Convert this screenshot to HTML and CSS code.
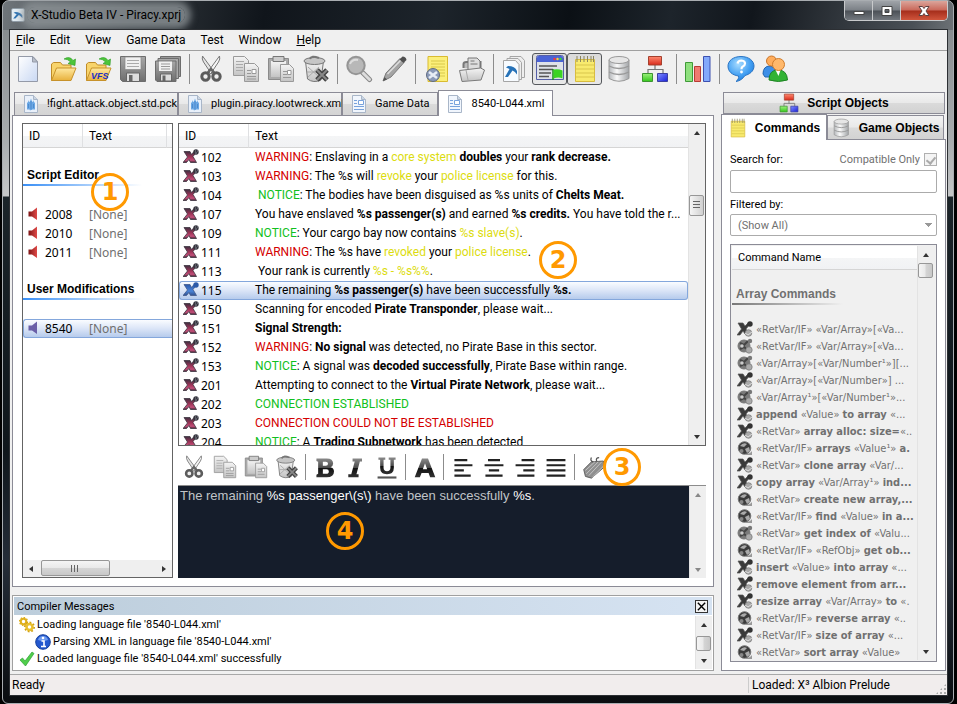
FILE: index.html
```html
<!DOCTYPE html>
<html lang="en">
<head>
<meta charset="utf-8">
<title>X-Studio Beta IV - Piracy.xprj</title>
<link rel="stylesheet" href="styles.css">
</head>
<body>
<svg class="sprite" aria-hidden="true">
  <defs>
    <linearGradient id="g-paper" x1="0" y1="0" x2="1" y2="1"><stop offset="0" stop-color="#fff"/><stop offset="1" stop-color="#c9d8f3"/></linearGradient>
    <linearGradient id="g-gray" x1="0" y1="0" x2="0" y2="1"><stop offset="0" stop-color="#f4f4f4"/><stop offset="1" stop-color="#c4c4c4"/></linearGradient>
    <linearGradient id="g-dark" x1="0" y1="0" x2="0" y2="1"><stop offset="0" stop-color="#a8a8a8"/><stop offset="1" stop-color="#6e6e6e"/></linearGradient>
    <linearGradient id="g-fold" x1="0" y1="0" x2="0" y2="1"><stop offset="0" stop-color="#ffe9a0"/><stop offset="1" stop-color="#e8b13c"/></linearGradient>
    <linearGradient id="g-ink" x1="0" y1="0" x2="0" y2="1"><stop offset="0" stop-color="#8a8a8a"/><stop offset=".5" stop-color="#4a4a4a"/><stop offset=".52" stop-color="#111"/><stop offset="1" stop-color="#333"/></linearGradient>
    <linearGradient id="g-red" x1="0" y1="0" x2="0" y2="1"><stop offset="0" stop-color="#ff8a70"/><stop offset="1" stop-color="#d92b1c"/></linearGradient>
    <linearGradient id="g-green" x1="0" y1="0" x2="0" y2="1"><stop offset="0" stop-color="#9bf07c"/><stop offset="1" stop-color="#35c71c"/></linearGradient>
    <linearGradient id="g-blue" x1="0" y1="0" x2="1" y2="1"><stop offset="0" stop-color="#7f8dff"/><stop offset="1" stop-color="#1a20d8"/></linearGradient>
    <linearGradient id="g-cyl" x1="0" y1="0" x2="1" y2="0"><stop offset="0" stop-color="#b5b8bb"/><stop offset=".4" stop-color="#fafafa"/><stop offset="1" stop-color="#a2a5a8"/></linearGradient>
    <radialGradient id="g-help" cx=".4" cy=".3" r=".8"><stop offset="0" stop-color="#a8dcff"/><stop offset=".6" stop-color="#3f9df2"/><stop offset="1" stop-color="#1a6fd0"/></radialGradient>
    <linearGradient id="g-xrow" x1="0" y1="0" x2="0" y2="1"><stop offset="0" stop-color="#3c3040"/><stop offset=".5" stop-color="#a03458"/><stop offset=".8" stop-color="#c2507a"/><stop offset="1" stop-color="#3a2230"/></linearGradient>
    <linearGradient id="g-xsel" x1="0" y1="0" x2="0" y2="1"><stop offset="0" stop-color="#2c58a8"/><stop offset=".6" stop-color="#4a84d8"/><stop offset="1" stop-color="#33508c"/></linearGradient>
    <linearGradient id="g-spk" x1="0" y1="0" x2="1" y2="0"><stop offset="0" stop-color="#7e1414"/><stop offset="1" stop-color="#e04a48"/></linearGradient>
  </defs>
  <symbol id="i-new" viewBox="0 0 28 28"><path d="M4.500 1.500h14.500l4.500 5v20h-19z" fill="url(#g-paper)" stroke="#949aa8"/><path d="M18.500 1.500v5.500h5z" fill="#b9bfca" stroke="#949aa8"/></symbol>
  <symbol id="i-open" viewBox="0 0 28 28"><path d="M2.500 25.500V9l2-1.500h7l2 2.500h8.500v4" fill="#f8d46c" stroke="#c08c28"/><path d="M2.500 25.500l5-12.500h19.500l-5 12.500z" fill="url(#g-fold)" stroke="#c7922a"/><path d="M15 4q6-3.500 9 1.500l2.500-1.500-.5 6.500-7-2 2.500-1.500Q19 4 15 4z" fill="#4cc63a" stroke="#2c9a25" stroke-width=".6"/></symbol>
  <symbol id="i-vfs" viewBox="0 0 28 28"><use href="#i-open"/><text x="7" y="24" font-family="Liberation Sans" font-size="9" font-style="italic" font-weight="bold" fill="#2030c8">VFS</text></symbol>
  <symbol id="i-save" viewBox="0 0 28 28"><path d="M1.500 1.500h25v25H3.500l-2-2z" fill="url(#g-dark)" stroke="#6d6d6d"/><path d="M6 2h16v12.500H6z" fill="#f0f0f0" stroke="#888" stroke-width=".7"/><path d="M8 5.500h12M8 8.500h12M8 11.500h12" stroke="#aaa"/><path d="M7.500 18h13v8.500h-13z" fill="#ddd" stroke="#666"/><path d="M10 20h3.500v6.500H10z" fill="#666"/></symbol>
  <symbol id="i-saveall" viewBox="0 0 28 28"><path d="M6.500 1.500h20v20h-20z" fill="#999" stroke="#6d6d6d"/><path d="M4 3.500h20.500v20H4z" fill="#aaa" stroke="#6d6d6d"/><path d="M1.500 6h20.500v20.500h-19l-1.500-1.500z" fill="url(#g-dark)" stroke="#6d6d6d"/><path d="M5 6.500h13v9.500H5z" fill="#f0f0f0"/><path d="M7 9h9M7 11.500h9M7 14h9" stroke="#999"/><path d="M6.500 19h11v7h-11z" fill="#ddd" stroke="#666"/><path d="M8.500 20.500h3v5.500h-3z" fill="#666"/></symbol>
  <symbol id="i-cut" viewBox="0 0 28 28"><path d="M5.500 1q-1 3 1 6l8 12 2-3z" fill="#e4e4e4" stroke="#777"/><path d="M22.500 1q1 3-1 6l-8 12-2-3z" fill="#f5f5f5" stroke="#777"/><path d="M10.500 18l3.500-4 3.500 4" fill="none" stroke="#666" stroke-width="2.500"/><circle cx="8.500" cy="21.500" r="3.700" fill="#f0f0f0" stroke="#5c5c5c" stroke-width="3"/><circle cx="19.500" cy="21.500" r="3.700" fill="#f0f0f0" stroke="#5c5c5c" stroke-width="3"/></symbol>
  <symbol id="i-copy" viewBox="0 0 28 28"><g fill="url(#g-gray)" stroke="#9a9a9a"><path d="M1.500 1.500h11l4 4v15h-15z"/><path d="M12.500 8.500h10l4 4v14h-14z"/></g><path d="M4 6.500h8M4 9.500h7M4 12.500h7M4 15.500h7" stroke="#aaa"/><path d="M15 15.500h4M15 18.500h4M15 21.500h9M15 24h9" stroke="#999"/><path d="M20 14.500h4v4h-4z" fill="#fff" stroke="#999"/></symbol>
  <symbol id="i-paste" viewBox="0 0 28 28"><path d="M1.500 3.500h20v21h-20z" fill="#aaa" stroke="#8b8b8b"/><path d="M4 6h15v16H4z" fill="url(#g-gray)"/><path d="M6 1.500h11v5H6z" fill="#ccc" stroke="#777"/><path d="M13.500 9.500h9l4 4v13h-13z" fill="url(#g-gray)" stroke="#999"/><path d="M16 16.500h4M16 19.500h4M16 22.500h8" stroke="#999"/><path d="M20.500 15.500h3.500v4h-3.500z" fill="#fff" stroke="#999"/></symbol>
  <symbol id="i-del" viewBox="0 0 28 28"><path d="M3.500 6l2 18q6 4.500 13.500 1l2.500-19z" fill="url(#g-gray)" stroke="#777"/><path d="M6 12l11 10M17 12L6 22M5 17h14" stroke="#aaa"/><ellipse cx="12.500" cy="6" rx="10.500" ry="3.500" fill="#c6c6c6" stroke="#777"/><path d="M8 4q1-4 9-1" fill="none" stroke="#777" stroke-width="2"/><path d="M15 15l10 10M25 15L15 25" stroke="#444" stroke-width="5"/><path d="M15 15l10 10M25 15L15 25" stroke="#888" stroke-width="2"/></symbol>
  <symbol id="i-find" viewBox="0 0 28 28"><path d="M17.500 17.500l7 7" stroke="#888" stroke-width="5" stroke-linecap="round"/><path d="M18 18l6.500 6.500" stroke="#ddd" stroke-width="3" stroke-linecap="round"/><circle cx="11" cy="10.500" r="8.700" fill="#b8b8b8" stroke="#959595" stroke-width="2"/><path d="M5 9q2-5 8-4" stroke="#ddd" stroke-width="2" fill="none"/></symbol>
  <symbol id="i-edit" viewBox="0 0 28 28"><path d="M3 26l3-8L20 3.500l4 4L11 22z" fill="#a4a4a4" stroke="#7c7c7c"/><path d="M7.500 19L21 5" stroke="#ddd" stroke-width="1.500"/><path d="M19.500 4.500l3-3q3.500 0 4 3.500l-3 3z" fill="#505050"/><path d="M3 26l1.500-4 2.500 2.500z" fill="#555"/></symbol>
  <symbol id="i-script" viewBox="0 0 28 28"><path d="M5 1.500h19.500v25H5z" fill="#fbef7a" stroke="#d9bb30"/><path d="M8 6h14M8 9h14M8 12h14M8 15h14M8 18h14M8 21h14" stroke="#d9c94a"/><circle cx="10" cy="20" r="6.500" fill="#8b9ab8" stroke="#5f6b84"/><path d="M6 17l8 6M14 17l-8 6" stroke="#e7edf5" stroke-width="2.500"/></symbol>
  <symbol id="i-box" viewBox="0 0 28 28"><path d="M5.500 13V9q0-2 3-2h14v8" fill="#bbb" stroke="#777" stroke-width="2"/><path d="M10 12V3h9l3 3v10H10z" fill="#ddd" stroke="#777"/><path d="M12.500 9h7M12.500 6h4" stroke="#777"/><path d="M1.500 15.500l21-2.500 4 2-3.500 10-19 1.500z" fill="url(#g-gray)" stroke="#7b7b7b"/><path d="M8 15l2 10" stroke="#aaa"/></symbol>
  <symbol id="i-pages" viewBox="0 0 28 28"><g fill="#eee" stroke="#a5a5a5"><path d="M9 1.500h11l3.500 4v17H9z"/><path d="M6 3.500h11l3.500 4v17H6z"/><path d="M2.500 5.500h12l3.500 4v17H2.500z" fill="#f7fbff"/></g><path d="M5 12.500l2-1.500q7 0 9 5v3.500q-2-3-4.500-4L7 22H4l4.500-8z" fill="#2672b8"/></symbol>
  <symbol id="i-window" viewBox="0 0 28 28"><path d="M.5 2.500q0-2 2-2h23q2 0 2 2v22h-27z" fill="#dfe2e8" stroke="#555fa8"/><path d="M1 7V2.500q0-1.500 1.500-1.500h23q1.500 0 1.500 1.500V7z" fill="#4a63d6"/><circle cx="18.500" cy="4" r="1.200" fill="#f33"/><circle cx="21.500" cy="4" r="1.200" fill="#fc3"/><circle cx="24.500" cy="4" r="1.200" fill="#3d3"/><path d="M3 11h18M3 14.500h14M3 18h12M3 21.500h10" stroke="#555" stroke-width="1.300"/><path d="M17 25V14" stroke="#1a8a1a" stroke-width="1.500"/><path d="M17.500 14.500q5-1 9 1v8q-4-2-9 0z" fill="#3bd324"/></symbol>
  <symbol id="i-note" viewBox="0 0 28 28"><path d="M4.500 4.500h19v22h-19z" fill="#f8ea6e" stroke="#d8bc3e"/><path d="M5 10h18M5 14h18M5 18h18M5 22h18" stroke="#d9c64c"/><path d="M6 1v6M9.500 1v6M13 1v6M16.500 1v6M20 1v6M22.500 1v6" stroke="#8b8660"/></symbol>
  <symbol id="i-db" viewBox="0 0 28 28"><path d="M3 5v18.500q10 5.500 20 0V5z" fill="url(#g-cyl)" stroke="#999"/><path d="M3 11q10 5 20 0M3 17q10 5 20 0" fill="none" stroke="#999" stroke-width="1.300"/><ellipse cx="13" cy="5" rx="10" ry="3.500" fill="#e6e6e6" stroke="#999"/></symbol>
  <symbol id="i-org" viewBox="0 0 28 28"><path d="M14 9v6M7 19v-4.500h15V19" fill="none" stroke="#777" stroke-width="1.200"/><path d="M7.500 1.500h13v8.500h-13z" fill="url(#g-red)" stroke="#a4402e"/><path d="M1.500 18.500h10v8h-10z" fill="url(#g-green)" stroke="#3d9430"/><path d="M16.500 18.500h10v8h-10z" fill="url(#g-blue)" stroke="#3b3fa0"/></symbol>
  <symbol id="i-chart" viewBox="0 0 28 28"><path d="M1.500 7.500h7v19h-7z" fill="#8fe07e" stroke="#3f9a38"/><path d="M10.500 11.500h6v15h-6z" fill="#f07a70" stroke="#b83a34"/><path d="M19.500 1.500h6.500v25h-6.500z" fill="#83a9fb" stroke="#3c50b0"/></symbol>
  <symbol id="i-help" viewBox="0 0 28 28"><path d="M14 1.500c8 0 13 4.500 13 9.500 0 5.500-5 8.500-9 9.500-2 3-5 5.500-9 6 2-1.500 3-3.500 2.500-5.500C5 20 1 16.500 1 11c0-5 5-9.500 13-9.500z" fill="url(#g-help)" stroke="#2b75c4"/><path d="M10.500 8.500q.5-3 4-3 3.500.3 3.500 3 0 2-2.500 3.200-1 .6-1 2.600" fill="none" stroke="#fff" stroke-width="2.200"/><circle cx="14.500" cy="17" r="1.400" fill="#fff"/></symbol>
  <symbol id="i-users" viewBox="0 0 28 28"><path d="M1 19q0-8 7-8l5 2v9H3z" fill="#3c8fe8" stroke="#2266b0"/><circle cx="9.500" cy="6" r="5" fill="#ffad5c" stroke="#c9752a"/><path d="M7 25q0-10 9-10 9 0 9.500 10-9 3-18.500 0z" fill="#32b335" stroke="#1f8425"/><path d="M13.500 15h5l-2 6z" fill="#fff"/><circle cx="16.500" cy="9.500" r="6" fill="#ffb86b" stroke="#d07c2c"/></symbol>
  <symbol id="i-bold" viewBox="0 0 28 28"><path d="M4 4h12q7.500 0 7.500 6 0 3-3 4.300 4 1 4 5Q24.500 26 16 26H4v-3l2-1V8L4 7zM11.500 8v4.500h3.500q2.500 0 2.500-2.200T15 8zM11.500 16.500V22h4q3 0 3-2.800t-3-2.700z" fill="url(#g-ink)" fill-rule="evenodd"/></symbol>
  <symbol id="i-italic" viewBox="0 0 28 28"><path d="M10 4h11v3.500h-2.500L14.500 22.500H17V26H5v-3.500h3.500l4-15H10z" fill="url(#g-ink)"/></symbol>
  <symbol id="i-under" viewBox="0 0 28 28"><path d="M4 3h8v2.500h-2V15q0 4 4 4t4-4V5.500h-2V3h8v2.500h-2V15q0 7.500-8 7.500T6 15V5.500H4z" fill="url(#g-ink)"/><path d="M3 25h22v2.500H3z" fill="#555"/></symbol>
  <symbol id="i-font" viewBox="0 0 28 28"><path d="M10.500 4h7L26 26h-6l-1.800-5H10l-2 5H2zM11.500 16.500h5L14 9.500z" fill="url(#g-ink)" fill-rule="evenodd"/></symbol>
  <symbol id="i-al" viewBox="0 0 28 28"><path d="M4 6h15M4 12h21M4 18h11M4 24h19" stroke="#222" stroke-width="2.500"/></symbol>
  <symbol id="i-ac" viewBox="0 0 28 28"><path d="M7 6h14M3 12h22M8 18h12M4 24h20" stroke="#222" stroke-width="2.500"/></symbol>
  <symbol id="i-ar" viewBox="0 0 28 28"><path d="M10 6h15M3 12h22M12 18h13M5 24h20" stroke="#222" stroke-width="2.500"/></symbol>
  <symbol id="i-aj" viewBox="0 0 28 28"><path d="M3 6h22M3 12h22M3 18h22M3 24h22" stroke="#222" stroke-width="2.500"/></symbol>
  <symbol id="i-tag" viewBox="0 0 28 28"><path d="M2 17l9-9 14-1 1 7-15 13-7-2z" fill="#8f8f8f" stroke="#555"/><path d="M4 18L15 8M5 22L19 8M8 24L23 8M12 26l14-14" stroke="#ccc"/><path d="M13 8q-4-1-2-5M17 7q-1-4 3-4" stroke="#555" fill="none" stroke-width="1.500"/></symbol>
  <symbol id="i-ship" viewBox="0 0 16 18"><path d="M1.500.5h9l4 4v13h-13z" fill="#e9f0fa" stroke="#a9b6c8"/><path d="M10.500.5v4h4" fill="#cbd6e4" stroke="#a9b6c8"/><path d="M8 3.500l1 3 1 .5.500-2 .5 2 1 1v6l-1 1-1-1-1 1H8l-1 .5-1-1.500-1 1-1-1V8l1-1 .5-2L6 7l1-.5z" fill="#6aa7e4"/><path d="M8 6v8M5.500 9v4M10.500 9v4" stroke="#3f7fc4" stroke-width=".7"/></symbol>
  <symbol id="i-doc" viewBox="0 0 16 18"><path d="M1.500.5h9l4 4v13h-13z" fill="#f1f6fd" stroke="#a9b6c8"/><path d="M10.500.5v4h4" fill="#cbd6e4" stroke="#a9b6c8"/><path d="M3 5.500h3M3 8.500h3M3 11.500h10M3 14.500h10" stroke="#79a3dc"/><path d="M7.500 5.500h5v4h-5z" fill="#fff" stroke="#79a3dc"/></symbol>
  <symbol id="i-x" viewBox="0 0 16 16"><path d="M1 2.500h6l1.500 3 2.500-3h3L10 7.500l3.500 6H7.500L6 10.500l-2.500 3H0l4.500-5.500z" fill="url(#g-xrow)" stroke="#3d3340" stroke-width=".8"/><circle cx="13" cy="3" r="2.700" fill="#35353d"/><path d="M12 2h1M14 2h1M12 4h2" stroke="#aab" stroke-width=".7"/></symbol>
  <symbol id="i-xs" viewBox="0 0 16 16"><path d="M1 2.500h6l1.500 3 2.500-3h3L10 7.500l3.500 6H7.500L6 10.500l-2.500 3H0l4.500-5.500z" fill="url(#g-xsel)" stroke="#42598a" stroke-width=".8"/><circle cx="13" cy="3" r="2.700" fill="#2c5aa8"/></symbol>
  <symbol id="i-cx" viewBox="0 0 16 16"><path d="M1 2h5l2 3 3-3h3L9 8l3 5H8L6 10l-3 4H0l4.500-6z" fill="#3a3a3a" stroke="#555" stroke-width=".7"/><circle cx="13" cy="3" r="2.700" fill="#333"/><circle cx="11.500" cy="12" r="3.300" fill="#aaa" stroke="#777" stroke-width=".7"/><path d="M8 12l3 2 4-3" stroke="#ddd" fill="none"/></symbol>
  <symbol id="i-cg" viewBox="0 0 16 16"><circle cx="7" cy="8" r="6" fill="#7a7a7a" stroke="#777"/><path d="M3 5l4 2 4-4M3 11l4-2 5 4" stroke="#444" stroke-width="2" fill="none"/><circle cx="5" cy="8" r="1.700" fill="#ccc"/><circle cx="13" cy="3" r="2.200" fill="#777"/><circle cx="12" cy="12" r="3.200" fill="#aaa" stroke="#777" stroke-width=".7"/></symbol>
  <symbol id="i-cb" viewBox="0 0 16 16"><circle cx="7.500" cy="8" r="6.300" fill="#3c3c3c" stroke="#777"/><path d="M3 6q3-4 7-2l-3 3zM8 9l4-2 1 4-3 2z" fill="#aaa"/><circle cx="4.500" cy="11" r="2" fill="#888"/><path d="M9 14q4 0 6-3v4H9z" fill="#999"/></symbol>
  <symbol id="i-spk" viewBox="0 0 16 16"><path d="M1.500 5.500H5L10 1.500v12.500L5 10.500H1.500z" fill="url(#g-spk)"/></symbol>
  <symbol id="i-spks" viewBox="0 0 16 16"><path d="M1.500 5.500H5L10 1.500v12.500L5 10.500H1.500z" fill="#6a5fa8"/></symbol>
  <symbol id="i-gears" viewBox="0 0 16 16"><circle cx="4.500" cy="4.500" r="2.700" fill="none" stroke="#dfb01e" stroke-width="2"/><circle cx="4.500" cy="4.500" r="3.900" fill="none" stroke="#dfb01e" stroke-width="1.500" stroke-dasharray="1.500 1.500"/><circle cx="10.500" cy="10" r="3" fill="none" stroke="#eac02c" stroke-width="2.500"/><circle cx="10.500" cy="10" r="4.700" fill="none" stroke="#d3a213" stroke-width="1.600" stroke-dasharray="1.800 1.800"/></symbol>
  <symbol id="i-info" viewBox="0 0 16 16"><circle cx="8" cy="8" r="7.300" fill="#2358cf" stroke="#16409c"/><path d="M3 6q1-4 5-4t5 4q-5 2-10 0z" fill="#6e9bf0"/><path d="M6.500 7h2.500v5M6 12.500h5" stroke="#fff" stroke-width="1.600" fill="none"/><circle cx="8" cy="4" r="1.300" fill="#fff"/></symbol>
  <symbol id="i-ok" viewBox="0 0 16 16"><path d="M1 9l2.500-2L6 10 13 1l2 1.500L6.500 15z" fill="#4fce4a" stroke="#2f9f36" stroke-width=".7"/></symbol>
  <symbol id="i-app" viewBox="0 0 16 16"><rect x=".5" y=".5" width="15" height="15" rx="2" fill="#e3edf4" stroke="#8a98a4"/><path d="M3 5.500l2-1q6 0 8 4v3q-2-2.500-4-3.500L5 12H2.500L6.500 7z" fill="#2d73b4"/></symbol>
</svg>

<div class="window">
  <header class="titlebar">
    <svg class="app-icon"><use href="#i-app"/></svg>
    <h1 class="title">X-Studio Beta IV - Piracy.xprj</h1>
    <div class="window-buttons">
      <button class="wb wb-min" aria-label="Minimize"><svg viewBox="0 0 14 12"><path d="M2 6.500h10v3H2z" fill="#fff" stroke="#444"/></svg></button>
      <button class="wb wb-max" aria-label="Maximize"><svg viewBox="0 0 14 12"><path d="M2 1.500h10v9H2zM5 4.500v3h4v-3z" fill="#fff" stroke="#444" fill-rule="evenodd"/></svg></button>
      <button class="wb wb-close" aria-label="Close"><svg viewBox="0 0 14 12"><path d="M2 1.500h3.500L7 3.500l1.500-2H12L9 6l3 4.500H8.500L7 8.500l-1.500 2H2L5 6z" fill="#fff" stroke="#5c4040"/></svg></button>
    </div>
  </header>

  <div class="client">
    <nav class="menubar">
      <button><u>F</u>ile</button><button>Edit</button><button>View</button><button>Game Data</button><button>Test</button><button>Window</button><button><u>H</u>elp</button>
    </nav>
    <div class="toolbar">
      <button aria-label="New"><svg><use href="#i-new"/></svg></button>
      <button aria-label="Open"><svg><use href="#i-open"/></svg></button>
      <button aria-label="Open from VFS"><svg><use href="#i-vfs"/></svg></button>
      <button aria-label="Save"><svg><use href="#i-save"/></svg></button>
      <button aria-label="Save all"><svg><use href="#i-saveall"/></svg></button>
      <span class="sep"></span>
      <button aria-label="Cut"><svg><use href="#i-cut"/></svg></button>
      <button aria-label="Copy"><svg><use href="#i-copy"/></svg></button>
      <button aria-label="Paste"><svg><use href="#i-paste"/></svg></button>
      <button aria-label="Delete"><svg><use href="#i-del"/></svg></button>
      <span class="sep"></span>
      <button aria-label="Find"><svg><use href="#i-find"/></svg></button>
      <button aria-label="Edit"><svg><use href="#i-edit"/></svg></button>
      <span class="sep"></span>
      <button aria-label="Compile script"><svg><use href="#i-script"/></svg></button>
      <button aria-label="Project"><svg><use href="#i-box"/></svg></button>
      <span class="sep"></span>
      <button aria-label="Documents"><svg><use href="#i-pages"/></svg></button>
      <button class="pressed" aria-label="Output window" aria-pressed="true"><svg><use href="#i-window"/></svg></button>
      <button class="pressed" aria-label="Commands window" aria-pressed="true"><svg><use href="#i-note"/></svg></button>
      <button aria-label="Game objects"><svg><use href="#i-db"/></svg></button>
      <button aria-label="Script objects"><svg><use href="#i-org"/></svg></button>
      <span class="sep"></span>
      <button aria-label="Statistics"><svg><use href="#i-chart"/></svg></button>
      <span class="sep"></span>
      <button aria-label="Help"><svg><use href="#i-help"/></svg></button>
      <button aria-label="Community"><svg><use href="#i-users"/></svg></button>
    </div>

    <div class="workspace">
      <main class="documents">
        <div class="doc-tabs">
          <button class="doc-tab wide"><svg><use href="#i-ship"/></svg>!fight.attack.object.std.pck</button>
          <button class="doc-tab wide"><svg><use href="#i-ship"/></svg>plugin.piracy.lootwreck.xml</button>
          <button class="doc-tab"><svg><use href="#i-doc"/></svg>Game Data</button>
          <button class="doc-tab active"><svg><use href="#i-doc"/></svg>8540-L044.xml</button>
        </div>
        <div class="doc-page">
          <section class="box pages">
            <div class="clip">
              <table class="list">
                <colgroup><col class="c-id"><col class="c-text"><col></colgroup>
                <thead><tr><th>ID</th><th>Text</th><th></th></tr></thead>
                <tbody>
                  <tr class="group"><th colspan="3"><span>Script Editor</span></th></tr>
                  <tr><td><svg><use href="#i-spk"/></svg>2008</td><td class="dim">[None]</td><td></td></tr>
                  <tr><td><svg><use href="#i-spk"/></svg>2010</td><td class="dim">[None]</td><td></td></tr>
                  <tr><td><svg><use href="#i-spk"/></svg>2011</td><td class="dim">[None]</td><td></td></tr>
                  <tr class="group"><th colspan="3"><span>User Modifications</span></th></tr>
                  <tr class="selected"><td><svg><use href="#i-spks"/></svg>8540</td><td class="dim">[None]</td><td></td></tr>
                </tbody>
              </table>
            </div>
            <div class="hscroll"><button class="arrow left" aria-label="Scroll left"></button><span class="thumb"></span><button class="arrow right" aria-label="Scroll right"></button></div>
            <span class="callout callout-1">1</span>
          </section>

          <div class="strings">
            <section class="box string-list">
              <div class="clip">
                <table class="list">
                  <colgroup><col class="c-sid"><col></colgroup>
                  <thead><tr><th>ID</th><th>Text</th></tr></thead>
                  <tbody>
                    <tr><td><svg><use href="#i-x"/></svg>102</td><td><i class="r">WARNING</i>: Enslaving in a <i class="y">core system</i> <b>doubles</b> your <b>rank decrease.</b></td></tr>
                    <tr><td><svg><use href="#i-x"/></svg>103</td><td><i class="r">WARNING</i>: The %s will <i class="y">revoke</i> your <i class="y">police license</i> for this.</td></tr>
                    <tr><td><svg><use href="#i-x"/></svg>104</td><td>&nbsp;<i class="g">NOTICE</i>: The bodies have been disguised as %s units of <b>Chelts Meat.</b></td></tr>
                    <tr><td><svg><use href="#i-x"/></svg>107</td><td>You have enslaved <b>%s passenger(s)</b> and earned <b>%s credits.</b> You have told the r...</td></tr>
                    <tr><td><svg><use href="#i-x"/></svg>109</td><td><i class="g">NOTICE</i>: Your cargo bay now contains <i class="y">%s slave(s)</i>.</td></tr>
                    <tr><td><svg><use href="#i-x"/></svg>111</td><td><i class="r">WARNING</i>: The %s have <i class="y">revoked</i> your <i class="y">police license</i>.</td></tr>
                    <tr><td><svg><use href="#i-x"/></svg>113</td><td>&nbsp;Your rank is currently <i class="y">%s - %s%%</i>.</td></tr>
                    <tr class="selected"><td><svg><use href="#i-xs"/></svg>115</td><td>The remaining <b>%s passenger(s)</b> have been successfully <b>%s.</b></td></tr>
                    <tr><td><svg><use href="#i-x"/></svg>150</td><td>Scanning for encoded <b>Pirate Transponder</b>, please wait...</td></tr>
                    <tr><td><svg><use href="#i-x"/></svg>151</td><td><b>Signal Strength:</b></td></tr>
                    <tr><td><svg><use href="#i-x"/></svg>152</td><td><i class="r">WARNING</i>: <b>No signal</b> was detected, no Pirate Base in this sector.</td></tr>
                    <tr><td><svg><use href="#i-x"/></svg>153</td><td><i class="g">NOTICE</i>: A signal was <b>decoded successfully</b>, Pirate Base within range.</td></tr>
                    <tr><td><svg><use href="#i-x"/></svg>201</td><td>Attempting to connect to the <b>Virtual Pirate Network</b>, please wait...</td></tr>
                    <tr><td><svg><use href="#i-x"/></svg>202</td><td><i class="g">CONNECTION ESTABLISHED</i></td></tr>
                    <tr><td><svg><use href="#i-x"/></svg>203</td><td><i class="r">CONNECTION COULD NOT BE ESTABLISHED</i></td></tr>
                    <tr><td><svg><use href="#i-x"/></svg>204</td><td><i class="g">NOTICE</i>: A <b>Trading Subnetwork</b> has been detected</td></tr>
                  </tbody>
                </table>
              </div>
              <div class="vscroll"><button class="arrow up" aria-label="Scroll up"></button><span class="thumb strings-thumb"></span><button class="arrow down" aria-label="Scroll down"></button></div>
              <span class="callout callout-2">2</span>
            </section>

            <div class="format-bar">
              <button aria-label="Cut text"><svg><use href="#i-cut"/></svg></button>
              <button aria-label="Copy text"><svg><use href="#i-copy"/></svg></button>
              <button aria-label="Paste text"><svg><use href="#i-paste"/></svg></button>
              <button aria-label="Delete text"><svg><use href="#i-del"/></svg></button>
              <span class="sep"></span>
              <button aria-label="Bold"><svg><use href="#i-bold"/></svg></button>
              <button aria-label="Italic"><svg><use href="#i-italic"/></svg></button>
              <button aria-label="Underline"><svg><use href="#i-under"/></svg></button>
              <span class="sep"></span>
              <button aria-label="Colour"><svg><use href="#i-font"/></svg></button>
              <span class="sep"></span>
              <button aria-label="Align left"><svg><use href="#i-al"/></svg></button>
              <button aria-label="Centre"><svg><use href="#i-ac"/></svg></button>
              <button aria-label="Align right"><svg><use href="#i-ar"/></svg></button>
              <button aria-label="Justify"><svg><use href="#i-aj"/></svg></button>
              <span class="sep"></span>
              <button aria-label="Insert button"><svg><use href="#i-tag"/></svg></button>
              <span class="callout callout-3">3</span>
            </div>

            <div class="editor">
              <div class="editor-text" role="textbox" aria-label="String text" contenteditable="true">The remaining <em>%s passenger\(s\)</em> have been successfully <em>%s</em>.</div>
              <div class="vscroll idle"><button class="arrow up" aria-label="Scroll up"></button><button class="arrow down" aria-label="Scroll down"></button></div>
              <span class="callout callout-4">4</span>
            </div>
          </div>
        </div>

        <section class="output">
          <header><h2>Compiler Messages</h2><button aria-label="Close messages"><svg viewBox="0 0 12 12"><path d="M2 2l8 8M10 2l-8 8" stroke="#000" stroke-width="1.500"/></svg></button></header>
          <div class="output-body">
            <ul>
              <li><svg><use href="#i-gears"/></svg>Loading language file '8540-L044.xml'</li>
              <li class="nested"><svg><use href="#i-info"/></svg>Parsing XML in language file '8540-L044.xml'</li>
              <li><svg><use href="#i-ok"/></svg>Loaded language file '8540-L044.xml' successfully</li>
            </ul>
            <div class="vscroll"><button class="arrow up" aria-label="Scroll up"></button><span class="thumb output-thumb"></span><button class="arrow down" aria-label="Scroll down"></button></div>
          </div>
        </section>
      </main>

      <aside class="sidebar">
        <button class="side-tab top"><svg><use href="#i-org"/></svg>Script Objects</button>
        <div class="side-tabs">
          <button class="side-tab active"><svg><use href="#i-note"/></svg>Commands</button>
          <button class="side-tab"><svg><use href="#i-db"/></svg>Game Objects</button>
        </div>
        <div class="side-page">
          <div class="search-head"><label for="search">Search for:</label><label class="compat" for="compat">Compatible Only <input id="compat" type="checkbox" checked disabled></label></div>
          <input id="search" class="field" type="text">
          <label class="filter-label" for="filter">Filtered by:</label>
          <select id="filter" class="field" disabled><option>(Show All)</option></select>
          <div class="commands">
            <div class="clip">
              <table class="list">
                <thead><tr><th>Command Name</th></tr></thead>
                <tbody>
                  <tr class="group"><th><span>Array Commands</span></th></tr>
                  <tr><td><svg><use href="#i-cx"/></svg>«RetVar/IF» «Var/Array»[«Va...</td></tr>
                  <tr><td><svg><use href="#i-cg"/></svg>«RetVar/IF» «Var/Array»[«Va...</td></tr>
                  <tr><td><svg><use href="#i-cg"/></svg>«Var/Array»[«Var/Number¹»][...</td></tr>
                  <tr><td><svg><use href="#i-cx"/></svg>«Var/Array»[«Var/Number»] ...</td></tr>
                  <tr><td><svg><use href="#i-cg"/></svg>«Var/Array¹»[«Var/Number¹»...</td></tr>
                  <tr><td><svg><use href="#i-cx"/></svg><b>append</b> «Value» <b>to array</b> «...</td></tr>
                  <tr><td><svg><use href="#i-cx"/></svg>«RetVar» <b>array alloc: size=</b>«..</td></tr>
                  <tr><td><svg><use href="#i-cb"/></svg>«RetVar/IF» <b>arrays</b> «Value¹» <b>a.</b></td></tr>
                  <tr><td><svg><use href="#i-cx"/></svg>«RetVar» <b>clone array</b> «Var/...</td></tr>
                  <tr><td><svg><use href="#i-cx"/></svg><b>copy array</b> «Var/Array¹» <b>ind...</b></td></tr>
                  <tr><td><svg><use href="#i-cb"/></svg>«RetVar» <b>create new array,...</b></td></tr>
                  <tr><td><svg><use href="#i-cb"/></svg>«RetVar/IF» <b>find</b> «Value» <b>in a...</b></td></tr>
                  <tr><td><svg><use href="#i-cg"/></svg>«RetVar» <b>get index of</b> «Valu...</td></tr>
                  <tr><td><svg><use href="#i-cb"/></svg>«RetVar/IF» «RefObj» <b>get ob...</b></td></tr>
                  <tr><td><svg><use href="#i-cx"/></svg><b>insert</b> «Value» <b>into array</b> «...</td></tr>
                  <tr><td><svg><use href="#i-cx"/></svg><b>remove element from arr...</b></td></tr>
                  <tr><td><svg><use href="#i-cx"/></svg><b>resize array</b> «Var/Array» <b>to</b> «.</td></tr>
                  <tr><td><svg><use href="#i-cb"/></svg>«RetVar/IF» <b>reverse array</b> «..</td></tr>
                  <tr><td><svg><use href="#i-cx"/></svg>«RetVar/IF» <b>size of array</b> «...</td></tr>
                  <tr><td><svg><use href="#i-cb"/></svg>«RetVar» <b>sort array</b> «Value»</td></tr>
                </tbody>
              </table>
            </div>
            <div class="vscroll"><button class="arrow up" aria-label="Scroll up"></button><span class="thumb"></span><button class="arrow down" aria-label="Scroll down"></button></div>
          </div>
        </div>
      </aside>
    </div>

    <footer class="statusbar"><span class="status">Ready</span><span class="loaded">Loaded: X³ Albion Prelude</span><span class="grip"></span></footer>
  </div>
</div>
</body>
</html>
```
FILE: styles.css
```css
:root {
  --ui: Roboto, "Noto Sans", sans-serif;
  --wide: "Noto Sans", "Open Sans", sans-serif;
  --small: "DejaVu Sans Condensed", "DejaVu Sans", sans-serif;
  --heading: "Liberation Sans", Arial, sans-serif;
  --face: #f0f0f0;
  --line: #8b8b96;
}
* { box-sizing: border-box; }
body { margin: 0; background: #000; color: #000; font: 12px/16px var(--ui); }
button { margin: 0; padding: 0; border: 0; background: none; color: inherit; font: inherit; }
h1, h2, ul { margin: 0; padding: 0; font: inherit; list-style: none; }
i { font-style: normal; }
svg { display: block; flex: none; }
.sprite { position: absolute; width: 0; height: 0; }

.window {
  display: flex; flex-direction: column; height: 100vh;
  margin: 0 3px 0 2px; padding: 0 5px 7px 6px;
  border: 1px solid #a9adb1; border-radius: 7px 7px 6px 6px;
  background: linear-gradient(100deg, #70767b 0, #30363b 130px, #10151b 260px, #1d242b 430px, #0b1015 560px, #1d242b 660px, #11161c 740px, #4a5056 900px, #6d7276) top / 100% 29px no-repeat,
    linear-gradient(#7f8487, #a9adaf 140px, #c5c7c8 195px, #1b2429 196px, #0f161b 450px, #252d38 560px, #0a0d10);
}
.titlebar { display: flex; align-items: center; gap: 6px; height: 28px; padding-left: 2px; }
.app-icon { width: 14px; height: 14px; }
.title { padding: 0 4px; color: #000; background: rgba(140, 146, 150, .8); box-shadow: 0 0 7px 6px rgba(140, 146, 150, .8); border-radius: 8px; margin-left: -4px; }
.window-buttons { display: flex; align-self: flex-start; height: 20px; margin-left: auto; border: 1px solid #c8cacc; border-top: 0; border-radius: 0 0 5px 5px; overflow: hidden; }
.wb { display: grid; place-items: center; width: 28px; background: linear-gradient(#9fa3a8, #7b8086 48%, #4b5056 52%, #73787e); border-right: 1px solid #c8cacc; }
.wb svg { width: 14px; height: 12px; }
.wb-close { width: 46px; border-right: 0; background: linear-gradient(#dba59b, #c9685a 48%, #a52d1b 52%, #d0553c); }

.client { display: flex; flex-direction: column; flex: 1; min-height: 0; border: 1px solid #2c2f33; background: var(--face); }
.menubar { display: flex; gap: 15px; height: 21px; padding: 0 6px; border-bottom: 1px solid #a0a0a0; line-height: 19px; }
.toolbar { display: flex; align-items: center; height: 36px; }
.toolbar button { display: grid; place-items: center; width: 35px; height: 32px; }
.toolbar svg { width: 28px; height: 28px; }
.sep { width: 8px; height: 30px; background: linear-gradient(#8c8c8c, #8c8c8c) center / 1px 100% no-repeat; }
.toolbar .pressed { border: 1px solid #55585c; border-radius: 3px; background: linear-gradient(#dadada, #e8e8e8); }

.workspace { display: grid; grid-template-columns: minmax(0, 1fr) 225px; gap: 7px; flex: 1; min-height: 0; padding: 3px 1px 3px 2px; }
.documents { display: flex; flex-direction: column; min-height: 0; }
.doc-tabs { display: flex; align-items: flex-end; height: 25px; padding-left: 2px; }
.doc-tab { display: flex; align-items: center; gap: 8px; height: 23px; padding: 0 8px; border: 1px solid var(--line); border-bottom: 0; background: linear-gradient(#f3f3f3, #e9e9e9 48%, #dadada 52%, #d4d4d4); font-size: 11px; line-height: 14px; white-space: nowrap; }
.doc-tab.wide { width: 164px; padding-right: 0; }
.doc-tab svg { width: 16px; height: 18px; }
.doc-tab.active { height: 26px; margin-bottom: -1px; background: #fff; position: relative; }
.doc-page { display: flex; gap: 5px; flex: 1; min-height: 0; padding: 7px 7px 8px 9px; border: 1px solid var(--line); background: #fff; }
.box { position: relative; display: flex; border: 1px solid #646464; background: #fff; min-height: 0; }
.pages { flex: 0 0 151px; flex-direction: column; }
.clip { flex: 1; min-width: 0; min-height: 0; overflow: hidden; }

.list { width: 100%; table-layout: fixed; border-collapse: separate; border-spacing: 0; }
.list th, .list td { padding: 0 0 0 6px; text-align: left; font-weight: inherit; white-space: nowrap; overflow: hidden; }
.list thead th { height: 24px; border-right: 1px solid #dfe0e2; border-bottom: 1px solid #d5d5d5; background: linear-gradient(#fff 50%, #f4f5f6 52%, #f1f2f4); }
.list thead th:last-child { border-right: 0; }
.list td { height: 19px; line-height: 17px; border: 1px solid transparent; border-width: 1px 0; }
.list td:first-child { padding-left: 4px; }
.list td svg { display: inline-block; width: 16px; height: 16px; margin-right: 2px; vertical-align: top; }
.box .list td:first-child, .dim { font-family: var(--wide); }
.c-id { width: 60px; }
.c-text { width: 84px; }
.c-sid { width: 70px; }
.list .group th { height: 57px; padding: 0; font: bold 12px/16px var(--heading); }
.group span { display: block; padding: 0 0 3px 4px; background: linear-gradient(90deg, #3a8ff5, #fff 80%) bottom / 100% 2px no-repeat; }
.dim { color: #707070; }
.selected td { border-color: #84a7dc; background: linear-gradient(#fafcff, #dbe5f7 50%, #b6cbec); }
.selected td:first-child { border-left: 1px solid #84a7dc; border-radius: 3px 0 0 3px; padding-left: 3px; }
.string-list .selected td:last-child { border-right: 1px solid #84a7dc; border-radius: 0 3px 3px 0; }
.r { color: #d40000; }
.g { color: #10c020; }
.y { color: #dcdc10; }

.vscroll { display: flex; flex-direction: column; flex: none; width: 17px; background: #efefef; border-left: 1px solid #e3e3e3; }
.hscroll { display: flex; height: 17px; background: #efefef; }
.arrow { display: grid; place-items: center; width: 16px; height: 17px; flex: none; }
.arrow::after { content: ""; border: 3px solid transparent; }
.up::after { border-top: 0; border-bottom: 4px solid #333; }
.down { margin-top: auto; }
.down::after { border-bottom: 0; border-top: 4px solid #333; }
.idle .up::after { border-bottom-color: #888; }
.idle .down::after { border-top-color: #888; }
.left::after { border-left: 0; border-right: 4px solid #333; }
.right { margin-left: auto; }
.right::after { border-right: 0; border-left: 4px solid #333; }
.thumb { width: 15px; height: 15px; border: 1px solid #979797; border-radius: 2px; background: linear-gradient(90deg, #f5f5f5, #e9e9e9 48%, #d5d5d5 52%, #c8c8c8); }
.hscroll .thumb { width: 69px; height: 16px; margin-left: 2px; background: repeating-linear-gradient(90deg, #666 0 1px, transparent 1px 3px) center / 9px 7px no-repeat, linear-gradient(#f5f5f5, #e9e9e9 48%, #d5d5d5 52%, #c8c8c8); }
.strings-thumb { height: 21px; margin-top: 54px; background: repeating-linear-gradient(#666 0 1px, transparent 1px 3px) center / 7px 9px no-repeat, linear-gradient(90deg, #f5f5f5, #d0d0d0); }

.strings { display: flex; flex-direction: column; flex: 1; min-width: 0; }
.string-list { flex: 1; }
.format-bar { position: relative; display: flex; align-items: center; height: 40px; padding-top: 2px; border-bottom: 1px solid #8c8c8c; }
.format-bar button { display: grid; place-items: center; width: 31px; height: 30px; }
.format-bar svg { width: 24px; height: 24px; }
.format-bar .sep { width: 7px; height: 26px; }
.editor { position: relative; display: flex; height: 92px; }
.editor-text { flex: 1; padding: 2px; background: #151d2b; color: #c0c4c8; font: 13px/16px "Liberation Sans", Arial, sans-serif; outline: 0; }
.editor-text em { font-style: normal; color: #fff; }

.callout { position: absolute; display: grid; place-items: center; width: 38px; height: 38px; border: 3px solid #f90; border-radius: 50%; color: #f90; font: bold 24px/24px "DejaVu Sans", sans-serif; }
.callout-1 { left: 68px; top: 49px; }
.callout-2 { left: 360px; top: 117px; }
.callout-3 { left: 425px; top: 2px; }
.callout-4 { left: 148px; top: 26px; }

.output { margin-top: 8px; padding: 1px; border: 1px solid #a0a0a0; background: #fff; font-size: 11px; line-height: 17px; }
.output header { display: flex; align-items: center; justify-content: space-between; height: 18px; padding: 0 4px 0 3px; background: linear-gradient(90deg, #bccddb, #d6e3f2); }
.output header button { width: 13px; height: 13px; border: 1px solid #333; background: #f4f4f4; }
.output header svg { width: 11px; height: 11px; }
.output-body { display: flex; justify-content: space-between; height: 54px; padding-top: 1px; }
.output li { display: flex; align-items: center; gap: 2px; height: 17px; padding-left: 5px; }
.output li.nested { padding-left: 21px; }
.output li svg { width: 16px; height: 16px; }
.output-thumb { margin-top: 3px; }

.sidebar { display: flex; flex-direction: column; min-height: 0; padding-top: 2px; }
.side-tab { display: flex; align-items: center; justify-content: center; gap: 8px; border: 1px solid var(--line); background: linear-gradient(#f3f3f3, #e9e9e9 48%, #dadada 52%, #d2d2d2); font: bold 12px/16px var(--heading); white-space: nowrap; }
.side-tab svg { width: 20px; height: 20px; }
.side-tab.top { flex: none; height: 22px; margin: 0 1px 0 2px; }
.side-tabs { display: flex; align-items: flex-end; height: 25px; padding-right: 2px; position: relative; }
.side-tabs .side-tab { flex: 1; height: 24px; border-bottom: 0; gap: 7px; }
.side-tabs .active { flex: 0 0 106px; height: 26px; margin-bottom: -1px; background: #fff; }
.side-page { display: flex; flex-direction: column; flex: 1; min-height: 0; padding: 12px 8px 8px 8px; border: 1px solid var(--line); background: #fff; font-size: 11px; line-height: 15px; }
.search-head { display: flex; justify-content: space-between; align-items: center; height: 15px; margin-bottom: 3px; }
.compat { display: flex; align-items: center; gap: 4px; color: #707070; }
.compat input { appearance: none; width: 13px; height: 13px; margin: 0; border: 1px solid #b0b0b0; background: #f4f4f4; display: grid; place-items: center; }
.compat input::after { content: ""; width: 4px; height: 7px; border: solid #aaa; border-width: 0 2px 2px 0; transform: rotate(40deg); }
.field { flex: none; width: 100%; height: 23px; margin: 0; padding: 0 7px; border: 1px solid #ababab; border-radius: 2px; background: #fff; font: inherit; color: #707070; }
.filter-label { margin: 4px 0 2px; }
select.field { appearance: none; opacity: 1; height: 22px; background: linear-gradient(to top right, transparent 50%, #999 50%) right 8px center / 4px 4px no-repeat, linear-gradient(to top left, transparent 50%, #999 50%) right 4px center / 4px 4px no-repeat, #fff; }
.commands { display: flex; flex: 1; min-height: 0; margin-top: 8px; padding: 1px; border: 1px solid var(--line); background: var(--face); font-family: var(--small); }
.commands .vscroll { width: 18px; }
.commands .list thead th { height: 24px; font-family: var(--ui); }
.commands .list td { height: 17px; padding-left: 5px; line-height: 17px; border: 0; color: #707070; }
.commands .list td svg { margin-right: 3px; }
.commands .group th { height: 51px; color: #707070; }
.commands .group span { background: linear-gradient(90deg, #777, var(--face) 60%) bottom / 100% 2px no-repeat; }

.statusbar { display: flex; align-items: center; height: 21px; border-top: 1px solid #a8a8a8; background: #f1eded; }
.status { flex: 1; padding-left: 2px; }
.loaded { width: 187px; padding-left: 3px; border-left: 1px solid #ccc; }
.grip { width: 12px; height: 12px; align-self: flex-end; background: radial-gradient(#aaa 1px, transparent 1px) 0 0 / 4px 4px; clip-path: polygon(100% 0, 100% 100%, 0 100%); }
```
